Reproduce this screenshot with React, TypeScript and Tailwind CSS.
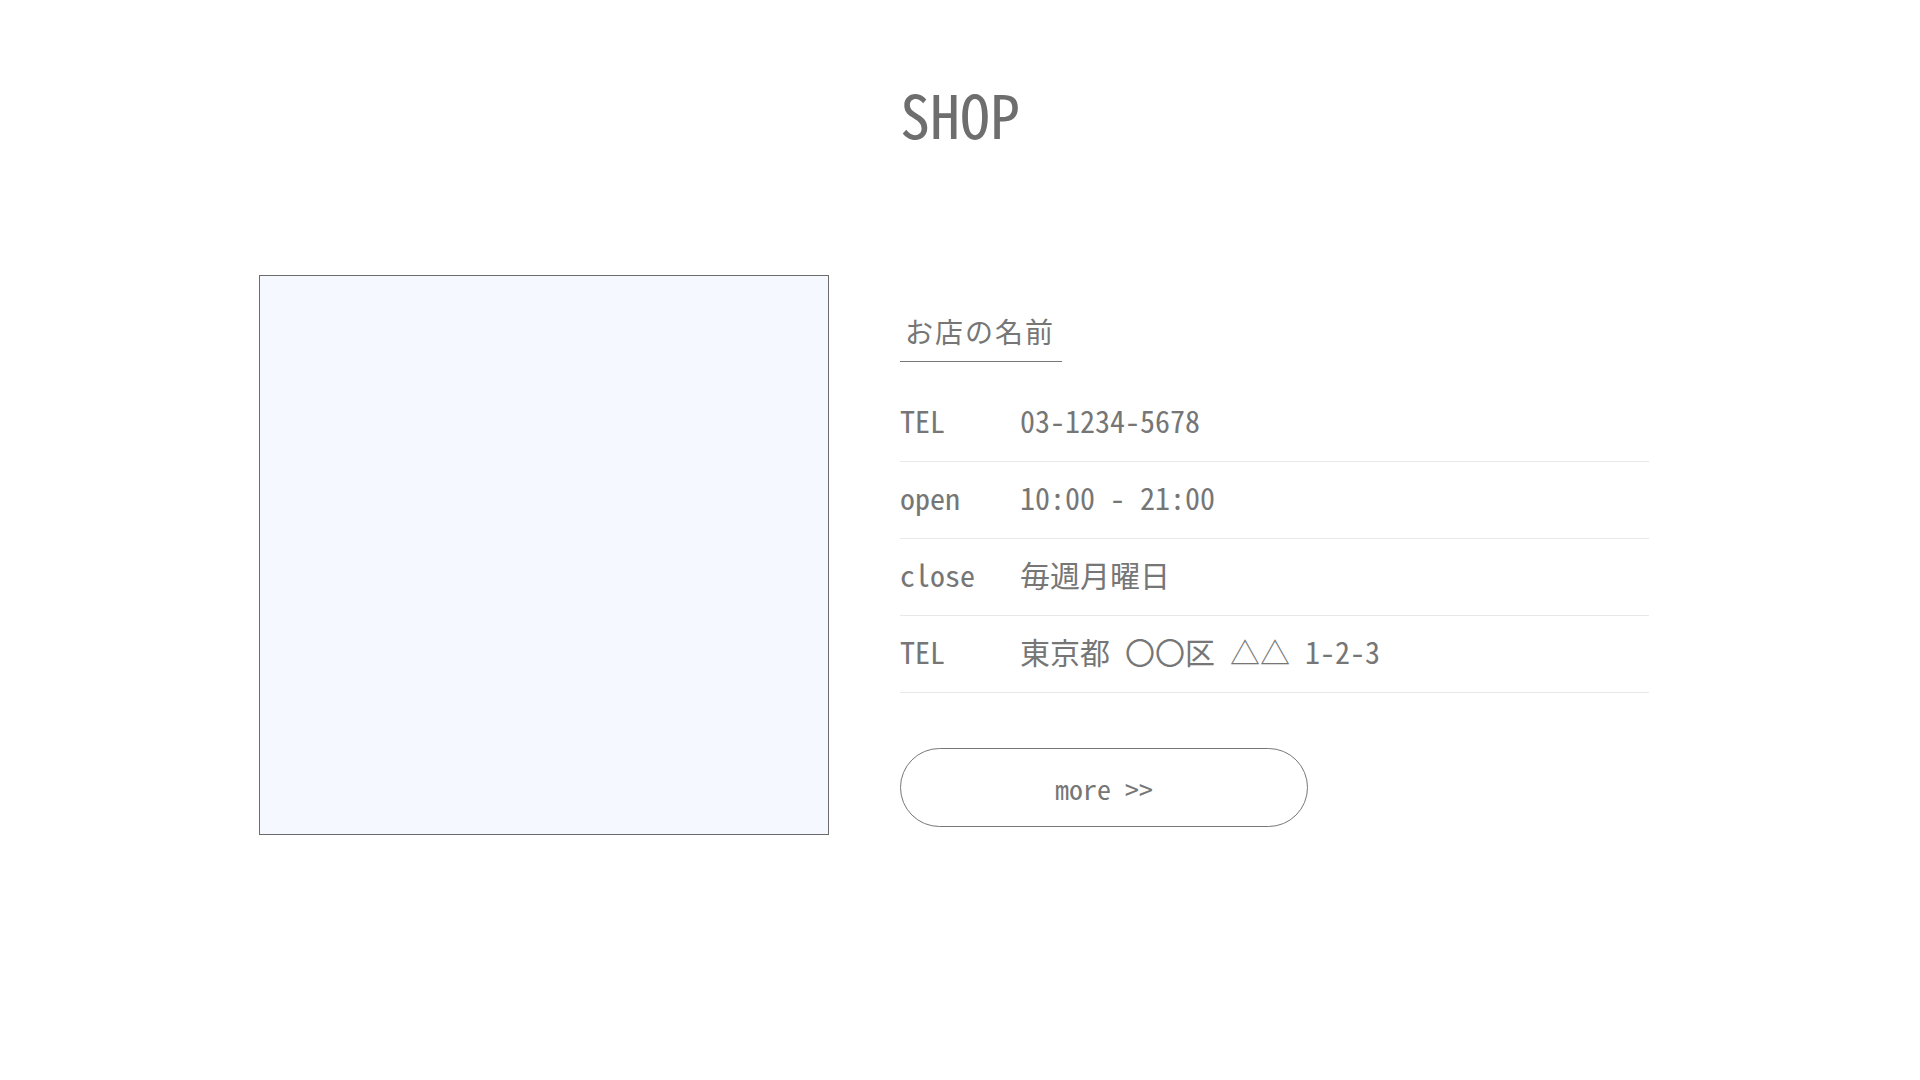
const rows = [
  { label: 'TEL', value: '03-1234-5678' },
  { label: 'open', value: '10:00 - 21:00' },
  { label: 'close', value: '毎週月曜日' },
  { label: 'TEL', value: '東京都 〇〇区 △△ 1-2-3' },
];

export default function App() {
  return (
    <div
      className="min-h-[1080px] bg-white text-[#767676]"
      style={{ fontFamily: '"Noto Sans Mono CJK JP", "Noto Sans CJK JP", monospace' }}
    >
      <section className="pt-[77px]">
        {/* Title */}
        <h2 className="text-center text-[60px] leading-[72px] text-[#6e6e6e]">SHOP</h2>

        <div className="w-[1402px] mx-auto mt-[126px] flex items-start gap-[71px]">
          {/* Photo placeholder */}
          <div className="w-[570px] h-[560px] shrink-0 border border-[#6b6b6b] bg-[#f5f8ff]" />

          {/* Shop info */}
          <div className="w-[749px] pt-[40px]">
            <div className="inline-block pl-[5px] pr-[7px] pb-[13px] border-b border-[#777] text-[28px] leading-[33px] tracking-[2px]">
              お店の名前
            </div>

            <dl className="mt-[23px]">
              {rows.map((row, i) => (
                <div
                  key={i}
                  className="flex items-center h-[77px] pb-[5px] border-b border-[#e8e8e8] text-[30px]"
                >
                  <dt className="w-[120px] shrink-0">{row.label}</dt>
                  <dd>{row.value}</dd>
                </div>
              ))}
            </dl>

            <button className="mt-[55px] w-[408px] h-[79px] rounded-full border border-[#777] text-[28px] text-[#767676] flex items-center justify-center">
              more &gt;&gt;
            </button>
          </div>
        </div>
      </section>
    </div>
  );
}
